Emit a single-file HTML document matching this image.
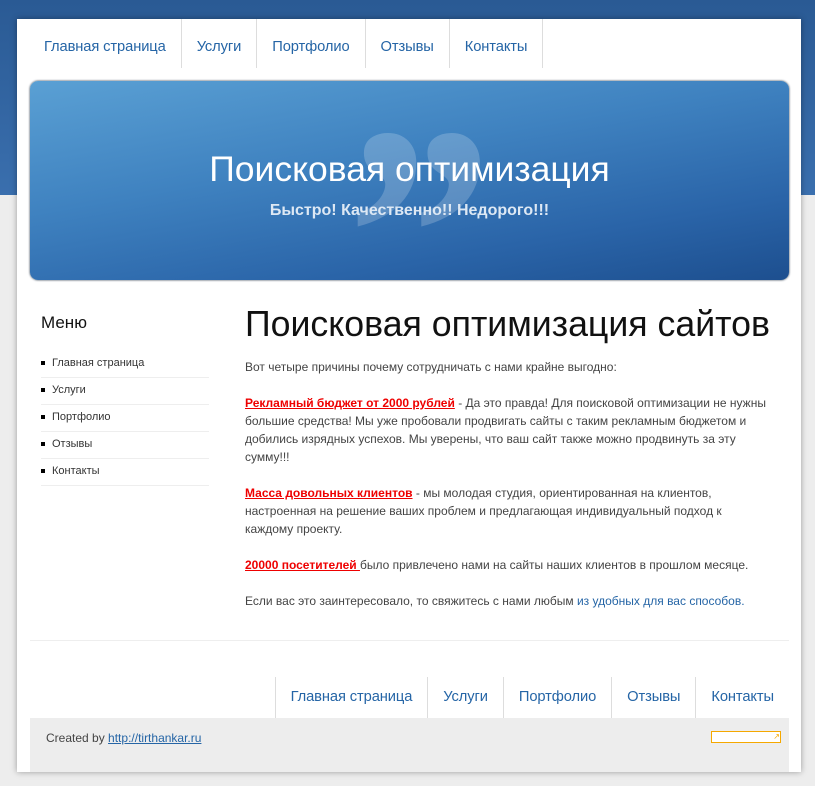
<!DOCTYPE html>
<html><head><meta charset="utf-8"><style>
body{margin:0;width:815px;height:786px;background:#ededed;font-family:"Liberation Sans",sans-serif;position:relative;overflow:hidden}
.top{position:absolute;left:0;top:0;width:815px;height:195px;background:linear-gradient(#2a5a94,#3a6fae)}
.wrap{position:absolute;left:17px;top:19px;width:784px;height:753px;background:#fff;box-shadow:0 0 6px rgba(0,0,0,.35)}
.nav{position:absolute;top:0;height:49px;display:flex}
.nav a{display:block;color:#2565a6;font-size:14.7px;text-decoration:none;line-height:56px;padding:0 15px;border-right:1px solid #ddd;letter-spacing:-.1px}
.banner{position:absolute;left:13px;top:62px;width:759px;height:199px;border-radius:8px;overflow:hidden;background:linear-gradient(170deg,#5aa0d4 0%,#3f82c0 40%,#2a64a8 75%,#1d4f8f 100%);box-shadow:0 0 2px #234}
.q{position:absolute;left:300px;top:0px;font-size:310px;color:rgba(255,255,255,.2);font-family:"Liberation Serif",serif;font-weight:bold;font-style:italic;line-height:1}
.bt{position:absolute;left:0;width:100%;text-align:center;color:#fff}
.side{position:absolute;left:24px;top:294px;width:168px}
.side h3{margin:0;font-size:17px;font-weight:normal;color:#111}
.side ul{list-style:none;margin:18px 0 0;padding:0}
.side li{font-size:11px;color:#333;height:26px;line-height:24px;border-bottom:1px solid #eee;padding-left:11px;position:relative}
.side li:before{content:"";position:absolute;left:0;top:10px;width:4px;height:4px;background:#000}
.main{position:absolute;left:228px;top:283px;width:524px;font-size:12px;color:#444;line-height:18px}
.main h1{margin:0 0 12px;font-size:35.7px;font-weight:normal;color:#111;line-height:44px;white-space:nowrap}
.main p{margin:0 0 18px}
.r{color:#e00;font-weight:bold;text-decoration:underline}
.bl{color:#2565a6}
.sep{position:absolute;left:13px;top:621px;width:759px;border-top:1px solid #eee}
.fnav{position:absolute;right:12px;top:658px;height:41px;display:flex}
.fnav a{display:block;color:#2565a6;font-size:14.7px;text-decoration:none;line-height:40px;padding:0 15px;border-left:1px solid #ddd;letter-spacing:-.1px}
.foot{position:absolute;left:13px;top:699px;width:759px;height:54px;background:#ededed;font-size:12px;color:#444}
</style></head><body>
<div class="top"></div>
<div class="wrap">
<div class="nav"><a style="padding-left:27px">Главная страница</a><a>Услуги</a><a>Портфолио</a><a>Отзывы</a><a>Контакты</a></div>
<div class="banner"><div class="q">”</div>
<div class="bt" style="top:68px;font-size:35.5px">Поисковая оптимизация</div>
<div class="bt" style="top:121px;font-size:16px;font-weight:bold;color:#dde8f4">Быстро! Качественно!! Недорого!!!</div></div>
<div class="side"><h3>Меню</h3><ul><li>Главная страница</li><li>Услуги</li><li>Портфолио</li><li>Отзывы</li><li>Контакты</li></ul></div>
<div class="main"><h1>Поисковая оптимизация сайтов</h1>
<p>Вот четыре причины почему сотрудничать с нами крайне выгодно:</p>
<p><span class="r">Рекламный бюджет от 2000 рублей</span> - Да это правда! Для поисковой оптимизации не нужны большие средства! Мы уже пробовали продвигать сайты с таким рекламным бюджетом и добились изрядных успехов. Мы уверены, что ваш сайт также можно продвинуть за эту сумму!!!</p>
<p><span class="r">Масса довольных клиентов</span> - мы молодая студия, ориентированная на клиентов, настроенная на решение ваших проблем и предлагающая индивидуальный подход к каждому проекту.</p>
<p><span class="r">20000 посетителей </span> было привлечено нами на сайты наших клиентов в прошлом месяце.</p>
<p>Если вас это заинтересовало, то свяжитесь с нами любым <span class="bl">из удобных для вас способов.</span></p></div>
<div class="sep"></div>
<div class="fnav"><a>Главная страница</a><a>Услуги</a><a>Портфолио</a><a>Отзывы</a><a>Контакты</a></div>
<div class="foot"><div style="position:absolute;left:16px;top:13px">Created by <span style="color:#2565a6;text-decoration:underline">http://tirthankar.ru</span></div>
<div style="position:absolute;left:681px;top:13px;width:68px;height:10px;border:1px solid #f5a800;background:#fff;font-size:8px;color:#f5a800;line-height:10px;text-align:right">↗</div></div>
</div>
</body></html>
